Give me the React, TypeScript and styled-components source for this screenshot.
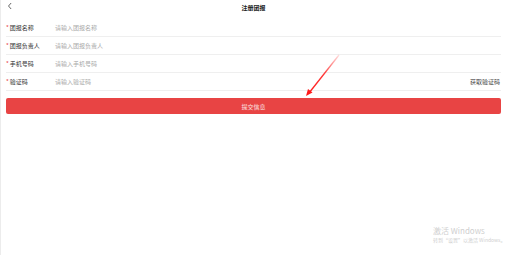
import React from 'react';
import styled, { createGlobalStyle } from 'styled-components';

const GlobalStyle = createGlobalStyle`
  html, body {
    margin: 0;
    padding: 0;
    background: #fff;
  }
  body {
    font-family: "Noto Sans CJK SC", "Noto Sans", sans-serif;
  }
`;

const fields = [
  { label: '团报名称', placeholder: '请输入团报名称' },
  { label: '团报负责人', placeholder: '请输入团报负责人' },
  { label: '手机号码', placeholder: '请输入手机号码' },
  { label: '验证码', placeholder: '请输入验证码', code: true },
];

const App = () => {
  return (
    <>
      <GlobalStyle />
      <Page>
        <Header>
          <Back viewBox="0 0 8 10">
            <path d="M5.5 1 L2 5 L5.5 9" />
          </Back>
          <Title>注册团报</Title>
        </Header>
        <Form>
          {fields.map((f) => (
            <Row key={f.label}>
              <Label>
                <Star>*</Star>
                {f.label}
              </Label>
              <Placeholder>{f.placeholder}</Placeholder>
              {f.code && <CodeLink>获取验证码</CodeLink>}
            </Row>
          ))}
        </Form>
        <Submit>提交信息</Submit>

        <Arrow viewBox="0 0 40 45">
          <defs>
            <linearGradient id="fade" x1="1" y1="0" x2="0" y2="1">
              <stop offset="0" stopColor="#ff3030" stopOpacity="0.15" />
              <stop offset="0.5" stopColor="#ff2020" stopOpacity="0.9" />
              <stop offset="1" stopColor="#ff1a1a" />
            </linearGradient>
          </defs>
          <path d="M36 2 L6 40" stroke="url(#fade)" strokeWidth="1.3" fill="none" />
          <path d="M3 43 L5 36 L9.5 39.5 Z" fill="#ff1a1a" />
        </Arrow>

        <Watermark>
          <WmTitle>激活 Windows</WmTitle>
          <WmSub>转到“设置”以激活 Windows。</WmSub>
        </Watermark>
      </Page>
    </>
  );
};

const Page = styled.div`
  position: relative;
  width: 507px;
  height: 255px;
  box-sizing: border-box;
  border-left: 1px solid #ececec;
  padding: 0 6px 0 5px;
  overflow: hidden;
`;

const Header = styled.div`
  position: relative;
  height: 19px;
  display: flex;
  align-items: center;
  justify-content: center;
`;

const Back = styled.svg`
  position: absolute;
  left: 1px;
  top: 2px;
  width: 6px;
  height: 8px;
  fill: none;
  stroke: #333;
  stroke-width: 1;
`;

const Title = styled.div`
  font-size: 6px;
  font-weight: 700;
  color: #222;
  margin-top: -5px;
`;

const Form = styled.div`
  display: flex;
  flex-direction: column;
`;

const Row = styled.div`
  height: 18px;
  display: flex;
  align-items: center;
  border-bottom: 1px solid #efefef;
  box-sizing: border-box;
  font-size: 6px;
`;

const Label = styled.div`
  width: 49px;
  color: #333;
`;

const Star = styled.span`
  color: #e84343;
  margin-right: 1px;
`;

const Placeholder = styled.div`
  flex: 1;
  color: #aaa;
`;

const CodeLink = styled.div`
  color: #444;
  padding-right: 1px;
`;

const Submit = styled.button`
  display: block;
  width: 100%;
  height: 16px;
  margin-top: 7px;
  border: none;
  border-radius: 2px;
  background: #e84444;
  color: #fbe3e3;
  font-family: inherit;
  font-size: 6px;
  padding: 0;
`;

const Arrow = styled.svg`
  position: absolute;
  left: 302px;
  top: 53px;
  width: 40px;
  height: 45px;
  overflow: visible;
`;

const Watermark = styled.div`
  position: absolute;
  left: 432px;
  top: 226px;
  color: #cfcfcf;
  font-family: "Noto Sans CJK SC", sans-serif;
`;

const WmTitle = styled.div`
  font-size: 8px;
  line-height: 10px;
`;

const WmSub = styled.div`
  font-size: 5px;
  line-height: 7px;
  white-space: nowrap;
`;

export default App;
